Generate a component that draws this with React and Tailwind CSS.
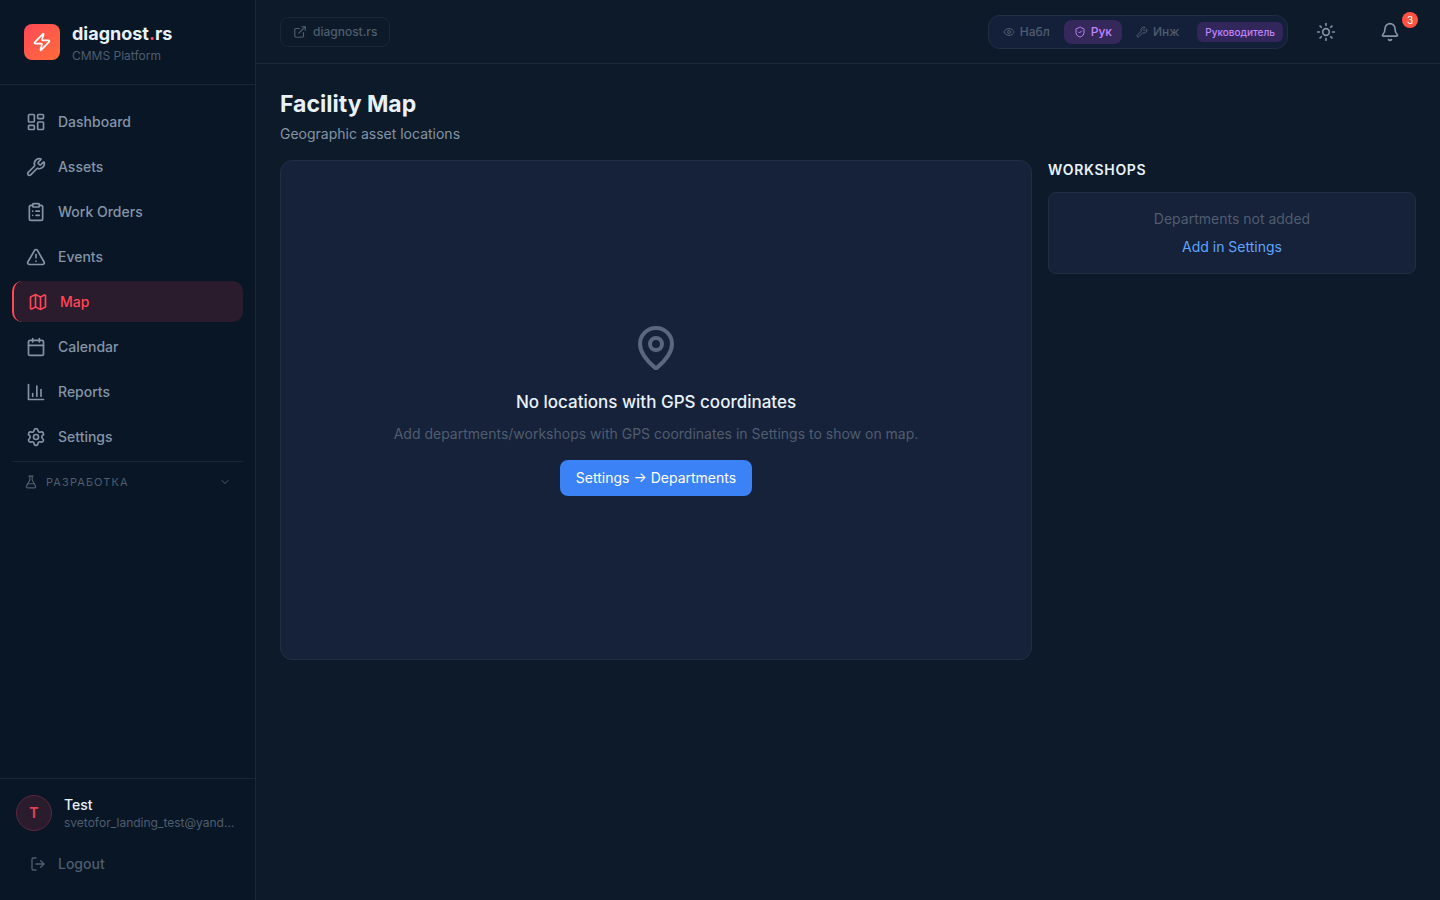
import { useState } from 'react';
import {
  Bell,
  Calendar,
  ChevronDown,
  ClipboardList,
  ExternalLink,
  Eye,
  FlaskConical,
  LayoutDashboard,
  LogOut,
  Map,
  MapPin,
  Settings,
  ShieldCheck,
  Sun,
  TriangleAlert,
  Wrench,
  Zap,
} from 'lucide-react';

// Square-cornered axis with three bars
function ReportsIcon({ className }) {
  return (
    <svg viewBox="0 0 24 24" fill="none" stroke="currentColor" strokeWidth="2" strokeLinecap="round" strokeLinejoin="round" className={className}>
      <path d="M3 3v18h18" />
      <path d="M18 17V9" />
      <path d="M13 17V5" />
      <path d="M8 17v-3" />
    </svg>
  );
}

const navItems = [
  { id: 'dashboard', label: 'Dashboard', icon: LayoutDashboard },
  { id: 'assets', label: 'Assets', icon: Wrench },
  { id: 'work-orders', label: 'Work Orders', icon: ClipboardList },
  { id: 'events', label: 'Events', icon: TriangleAlert },
  { id: 'map', label: 'Map', icon: Map },
  { id: 'calendar', label: 'Calendar', icon: Calendar },
  { id: 'reports', label: 'Reports', icon: ReportsIcon },
  { id: 'settings', label: 'Settings', icon: Settings },
];

const roles = [
  { id: 'viewer', label: 'Набл', icon: Eye },
  { id: 'manager', label: 'Рук', icon: ShieldCheck },
  { id: 'engineer', label: 'Инж', icon: Wrench },
];

function Sidebar() {
  return (
    <aside className="w-64 shrink-0 flex flex-col bg-[#091626] border-r border-[#182635]">
      <div className="flex items-center gap-3 px-6 py-5 border-b border-[#182635]">
        <div className="w-9 h-9 rounded-lg bg-linear-to-br from-[#ff4757] to-[#ff6b35] flex items-center justify-center">
          <Zap className="w-5 h-5 text-white" />
        </div>
        <div>
          <div className="text-lg leading-7 font-bold text-[#e8f1fa]">diagnost<span className="text-[#ff4757]">.</span>rs</div>
          <div className="text-xs leading-4 text-[#4f5d6e]">CMMS Platform</div>
        </div>
      </div>

      <nav className="flex-1 px-3 pt-4 flex flex-col gap-1">
        {navItems.map(({ id, label, icon: Icon }) => (
          <a
            key={id}
            href={`#${id}`}
            className={`flex items-center gap-3 px-3.5 py-2.5 rounded-[10px] text-sm leading-[21px] font-medium ${
              id === 'map' ? 'bg-[#2a1b2d] text-[#ff4757] border-l-2 border-[#ff4757]' : 'text-[#8494a6] hover:bg-white/5'
            }`}
          >
            <Icon className="w-5 h-5" />
            {label}
          </a>
        ))}
        <div className="border-t border-[#182635]">
          <button className="w-full flex items-center gap-2 px-3 py-3 text-[11px] leading-4 tracking-widest text-[#4f5d6e]">
            <FlaskConical className="w-3.5 h-3.5" />
            РАЗРАБОТКА
            <ChevronDown className="w-3 h-3 ml-auto" />
          </button>
        </div>
      </nav>

      <div className="border-t border-[#182635] p-4">
        <div className="flex items-center gap-3 mb-3">
          <div className="w-9 h-9 shrink-0 rounded-full bg-[#2a1b2d] border border-[#5e2640] flex items-center justify-center text-sm font-bold text-[#dd4154]">T</div>
          <div className="min-w-0">
            <div className="text-sm leading-5 font-medium text-[#e8f1fa]">Test</div>
            <div className="text-xs leading-4 text-[#4f5d6e] truncate">svetofor_landing_test@yandex.ru</div>
          </div>
        </div>
        <button className="w-full flex items-center gap-3 px-3.5 py-2.5 text-sm leading-[21px] font-medium text-[#4f5d6e]">
          <LogOut className="w-4 h-4" />
          Logout
        </button>
      </div>
    </aside>
  );
}

function Header() {
  const [role, setRole] = useState('manager');

  return (
    <header className="h-16 shrink-0 flex items-center justify-between px-6 border-b border-[#1c2a3a]">
      <a href="#site" className="flex items-center gap-1.5 px-3 py-1.5 rounded-lg border border-[#182635] text-xs leading-4 font-medium text-[#4f5d6e]">
        <ExternalLink className="w-3.5 h-3.5" />
        diagnost.rs
      </a>

      <div className="flex items-center gap-3">
        <div className="flex items-center gap-1 p-1 rounded-xl bg-[#14203a] border border-[#212d42]">
          {roles.map(({ id, label, icon: Icon }) => (
            <button
              key={id}
              onClick={() => setRole(id)}
              className={`flex items-center gap-[5px] px-2.5 py-1 rounded-lg text-xs leading-4 font-medium ${
                role === id ? 'bg-[#35285b] text-[#c084fc]' : 'text-[#4f5d6e]'
              }`}
            >
              <Icon className="w-3 h-3" />
              {label}
            </button>
          ))}
          <span className="ml-1 px-2 py-0.5 rounded-md bg-[#32275a] text-[10px] leading-4 font-medium text-[#c084fc]">Руководитель</span>
        </div>
        <button aria-label="Theme" className="h-10 px-4 flex items-center justify-center text-[#8494a6]">
          <Sun className="w-5 h-5" />
        </button>
        <button aria-label="Notifications" className="relative h-10 px-4 flex items-center justify-center text-[#8494a6]">
          <Bell className="w-5 h-5" />
          <span className="absolute top-0 -right-0.5 w-4 h-4 rounded-full bg-[#ff5244] text-white text-[10px] leading-4 text-center">3</span>
        </button>
      </div>
    </header>
  );
}

export default function App() {
  return (
    <div className="min-h-screen flex bg-[#0d1a29] font-['Inter','Liberation_Sans',sans-serif]">
      <Sidebar />
      <div className="flex-1 min-w-0 flex flex-col">
        <Header />
        <main className="flex-1 p-6">
          <h1 className="text-[23px] leading-8 font-bold text-[#e8f1fa]">Facility Map</h1>
          <p className="mt-1 text-sm leading-5 text-[#8494a6]">Geographic asset locations</p>

          <div className="mt-4 grid grid-cols-3 gap-4 items-start">
            <section className="col-span-2 min-h-[500px] rounded-xl bg-[#16213a] border border-[#212d42] flex flex-col items-center justify-center text-center">
              <MapPin className="w-12 h-12 text-[#5a677d]" />
              <h2 className="mt-4 text-[17px] leading-7 font-medium text-[#e8f1fa]">No locations with GPS coordinates</h2>
              <p className="mt-2 text-sm leading-5 text-[#4f5d6e]">Add departments/workshops with GPS coordinates in Settings to show on map.</p>
              <a href="#departments" className="mt-4 px-4 py-2 rounded-lg bg-[#3b82f6] text-white text-sm leading-5">Settings → Departments</a>
            </section>

            <section>
              <h3 className="text-sm leading-5 font-semibold tracking-wider text-[#e8f1fa]">WORKSHOPS</h3>
              <div className="mt-3 p-4 rounded-lg bg-[#16213a] border border-[#212d42] text-center text-sm leading-5">
                <p className="text-[#4f5d6e]">Departments not added</p>
                <a href="#settings" className="mt-2 inline-block text-[#60a5fa]">Add in Settings</a>
              </div>
            </section>
          </div>
        </main>
      </div>
    </div>
  );
}
